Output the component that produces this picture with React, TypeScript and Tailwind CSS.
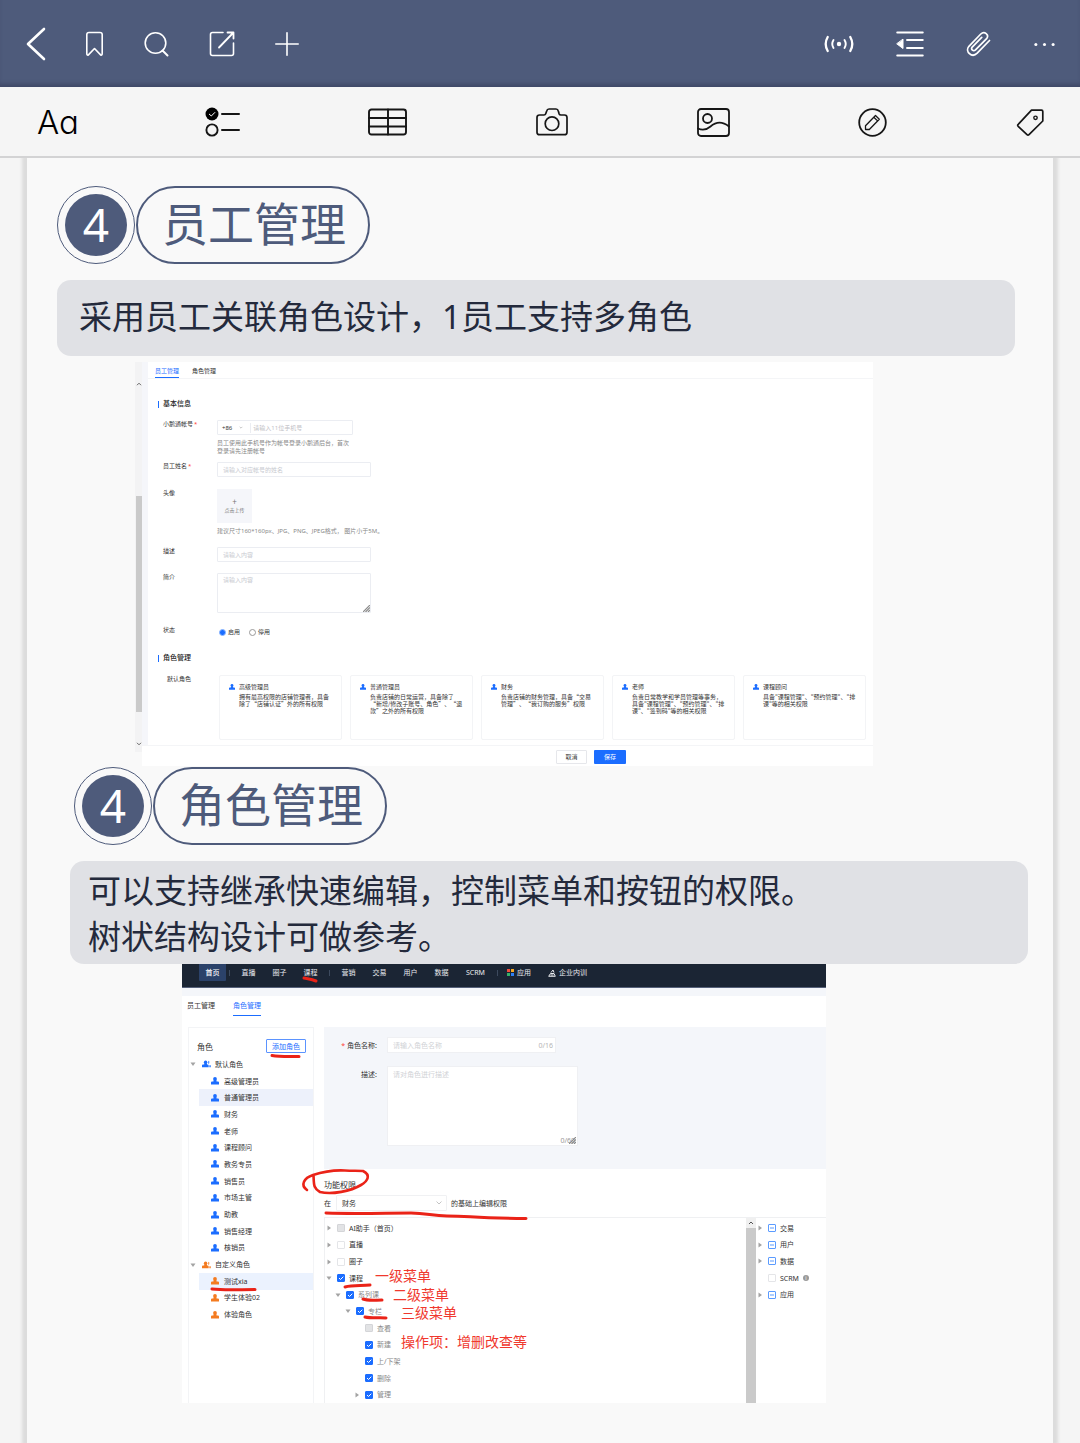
import type { ReactNode } from "react";

const cjk = "font-['Noto_Sans','Noto_Sans_CJK_SC',sans-serif]";

type IconProps = { box: string; className: string; children: ReactNode };

function Glyph({ box, className, children }: IconProps) {
  return (
    <svg
      viewBox={box}
      className={className}
      fill="none"
      stroke="currentColor"
      strokeLinecap="round"
      strokeLinejoin="round"
      aria-hidden="true"
    >
      {children}
    </svg>
  );
}

function IconButton({ label, children }: { label: string; children: ReactNode }) {
  return (
    <button type="button" aria-label={label} className="block shrink-0">
      {children}
    </button>
  );
}

function TopBar() {
  return (
    <header className="flex h-[87px] items-center justify-between bg-[#4e5b7b] pr-6 pl-[26px] text-white shadow-[inset_0_-5px_4px_-2px_rgba(50,54,84,0.5)]">
      <div className="flex items-center">
        <IconButton label="返回">
          <Glyph box="0 0 20 34" className="h-[34px] w-5">
            <path d="M18 2 2 17l16 15" strokeWidth="2.6" />
          </Glyph>
        </IconButton>
        <div className="ml-[39px] flex items-center gap-10">
          <IconButton label="书签">
            <Glyph box="0 0 19 26" className="h-[26px] w-[19px]">
              <path d="M1.8 3.6Q1.8 1.5 4 1.5h11q2.2 0 2.2 2.1v19q0 2-1.6 1.3L9.500 17.500 3.400 23.900Q1.800 24.600 1.800 22.600Z" strokeWidth="1.6" />
            </Glyph>
          </IconButton>
          <IconButton label="搜索">
            <Glyph box="0 0 25 26" className="h-[26px] w-[25px]">
              <circle cx="11.500" cy="12" r="10.300" strokeWidth="1.600" />
              <path d="m18.500 19.500 5 5" strokeWidth="2" />
            </Glyph>
          </IconButton>
          <IconButton label="分享">
            <Glyph box="0 0 26 26" className="h-[26px] w-[26px]">
              <path d="M14 1.500H3.500q-2 0-2 2v19q0 2 2 2h19q2 0 2-2V12" strokeWidth="1.600" />
              <path d="M10 16.500 24 2M18.500 1.500h6v6" strokeWidth="1.800" />
            </Glyph>
          </IconButton>
          <IconButton label="新增">
            <Glyph box="0 0 24 24" className="h-6 w-6">
              <path d="M12 0.800v22.400M0.800 12h22.400" strokeWidth="1.600" />
            </Glyph>
          </IconButton>
        </div>
      </div>
      <div className="flex items-center gap-[42px]">
        <IconButton label="广播">
          <Glyph box="0 0 30 18" className="h-[18px] w-[30px]">
            <circle cx="15" cy="9" r="2.200" fill="currentColor" stroke="none" />
            <path d="M9.500 5Q7 9 9.500 13M20.500 5q2.500 4 0 8" strokeWidth="1.900" />
            <path d="M3.700 2q-4 7 0 14M26.300 2q4 7 0 14" strokeWidth="2.300" />
          </Glyph>
        </IconButton>
        <IconButton label="目录">
          <Glyph box="0 0 28 26" className="h-[26px] w-7">
            <path d="M1.200 1.500h25.600M11 9h15.800M11 17h15.800M1.200 24.500h25.600" strokeWidth="1.900" />
            <path d="M7 8.500v9L1 13Z" fill="currentColor" strokeWidth="1" />
          </Glyph>
        </IconButton>
        <IconButton label="附件">
          <Glyph box="0 0 25 26" className="h-[26px] w-[25px]">
            <path
              d="M23.500 9.500 11.200 22.200c-5.300 5.200-12.600-1.700-8.300-6.900L14.800 3c3.600-3.500 8.800.7 5.800 4.700L9.500 18.900c-2.200 2-5-.5-3.300-2.800L15.700 6.400"
              strokeWidth="1.700"
            />
          </Glyph>
        </IconButton>
        <IconButton label="更多">
          <Glyph box="0 0 24 6" className="h-1.5 w-[23px]">
            <g fill="currentColor" stroke="none">
              <circle cx="3" cy="3.500" r="1.600" />
              <circle cx="12" cy="3.500" r="1.600" />
              <circle cx="21" cy="3.500" r="1.600" />
            </g>
          </Glyph>
        </IconButton>
      </div>
    </header>
  );
}

function ToolBar() {
  return (
    <nav
      aria-label="编辑工具"
      className="flex h-[71px] items-center justify-between border-b-2 border-[#d3d3d4] bg-[#f5f5f5] pt-px pr-9 pl-[37px] text-[#161616]"
    >
      <button type="button" className="w-[39px] text-center font-[Inter,sans-serif] text-[33px] leading-[40px] font-light text-black [font-feature-settings:'cv11']">
        Aa
      </button>
      <IconButton label="清单">
        <Glyph box="0 0 35 30" className="h-[30px] w-[35px]">
          <circle cx="7" cy="7" r="6.500" fill="black" stroke="none" />
          <path d="m4.300 7.200 2 1.800 3.500-3.500" stroke="white" strokeWidth="1" />
          <circle cx="7" cy="23" r="5.600" strokeWidth="1.900" />
          <path d="M17 7h17M17 23h17" strokeWidth="2" />
        </Glyph>
      </IconButton>
      <IconButton label="表格">
        <Glyph box="0 0 39 28" className="h-7 w-[39px]">
          <rect x="1" y="1.500" width="37" height="25" rx="2.500" strokeWidth="1.900" />
          <path d="M1 10h37M1 18.500h37M20 1.500v25" strokeWidth="1.900" />
        </Glyph>
      </IconButton>
      <IconButton label="拍照">
        <Glyph box="0 0 32 28" className="h-7 w-8">
          <path
            d="M3.500 7H8q1.300 0 1.700-1.200l1-2.800Q11.200 1 13 1h7q1.800 0 2.300 2l.8 2.800Q23.600 7 25 7h3.500Q31 7 31 9.500v14.700q0 2.500-2.500 2.500h-25Q1 26.700 1 24.200V9.500Q1 7 3.500 7Z"
            strokeWidth="1.700"
          />
          <circle cx="16" cy="15.700" r="6.800" strokeWidth="1.700" />
        </Glyph>
      </IconButton>
      <IconButton label="图片">
        <Glyph box="0 0 33 29" className="h-[29px] w-[33px]">
          <rect x="1" y="1" width="31" height="27" rx="3" strokeWidth="1.800" />
          <circle cx="10.500" cy="10.500" r="4.500" strokeWidth="1.800" />
          <path d="M1 20.500c5 2.500 9 1 12.500-2C18 14.500 24 12 32 18.500" strokeWidth="1.700" />
        </Glyph>
      </IconButton>
      <IconButton label="手写">
        <Glyph box="0 0 29 29" className="h-[29px] w-[29px]">
          <circle cx="14.500" cy="14.500" r="13.300" strokeWidth="1.800" />
          <path d="M7.500 21.500V17.800L17.500 7.500l3.800 3.700L11.300 21.500ZM15.800 9.200l3.800 3.700" strokeWidth="1.300" />
        </Glyph>
      </IconButton>
      <IconButton label="标签">
        <Glyph box="0 0 28 29" className="h-[29px] w-7">
          <path d="M15.500 2.200h10q1.300 0 1.300 1.300V13L13 26.700q-1 1-2 0L2.200 18.300q-1-1 0-2Z" strokeWidth="1.700" />
          <circle cx="19.500" cy="9.800" r="1.700" strokeWidth="1.400" />
        </Glyph>
      </IconButton>
    </nav>
  );
}

function Heading({ num, title }: { num: string; title: string }) {
  return (
    <h2 className="flex items-center gap-px text-[46px] leading-[62px] text-[#4e5b7b]">
      <span className="flex h-[78px] w-[78px] items-center justify-center rounded-full border border-[#4e5b7b]">
        <span className="flex h-[62px] w-[62px] items-center justify-center rounded-full bg-[#4e5b7b] pb-0.5 text-white">{num}</span>
      </span>
      <span className="flex h-[78px] items-center rounded-full border-2 border-[#4e5b7b] pr-[22px] pb-1 pl-6">{title}</span>
    </h2>
  );
}

function Person({ className }: { className: string }) {
  return (
    <svg viewBox="0 0 8 8" className={className} fill="currentColor" aria-hidden="true">
      <circle cx="4" cy="2" r="1.900" />
      <path d="M2.800 3h2.400l.4 1.600H7q1 0 1 1v1.900H0V5.600q0-1 1-1h1.400Z" />
    </svg>
  );
}

function Caret({ open }: { open: boolean }) {
  return (
    <svg viewBox="0 0 6 6" className="h-1.5 w-1.5 shrink-0 text-[#a3a3a3]" fill="currentColor" aria-hidden="true">
      {open ? <path d="M.5 1.500h5L3 5Z" /> : <path d="M1.500.5v5L5 3Z" />}
    </svg>
  );
}

function Grip() {
  return (
    <svg viewBox="0 0 7 7" className="absolute right-px bottom-px h-[7px] w-[7px] text-[#8a8a8a]" stroke="currentColor" aria-hidden="true">
      <path d="M0 7 7 0M2.500 7 7 2.500M5 7l2-2" strokeWidth="1.200" />
    </svg>
  );
}

const roleCards = [
  { name: "高级管理员", lines: ["拥有最高权限的店铺管理者，具备", "除了“店铺认证”外的所有权限"] },
  { name: "普通管理员", lines: ["负责店铺的日常运营，具备除了", "“新增/修改子账号、角色”、“退", "款”之外的所有权限"] },
  { name: "财务", lines: ["负责店铺的财务管理，具备“交易", "管理”、“我订购的服务”权限"] },
  { name: "老师", lines: ["负责日常教学和学员管理等事务，", "具备\"课程管理\"、\"预约管理\"、\"排", "课\"、\"签到码\"等的相关权限"] },
  { name: "课程顾问", lines: ["具备\"课程管理\"、\"预约管理\"、\"排", "课\"等的相关权限"] },
];

function GroupTitle({ children }: { children: ReactNode }) {
  return (
    <h3 className="ml-[10px] flex h-2 items-center gap-1 text-[7px] font-medium text-[#222]">
      <span className="h-[7px] w-px bg-[#1b6dff]" />
      {children}
    </h3>
  );
}

function Row({ label, id, required, height, children }: { label: string; id?: string; required?: boolean; height: string; children: ReactNode }) {
  return (
    <div className={`ml-[15px] flex items-start ${height}`}>
      <label htmlFor={id} className="h-2 w-[54px] shrink-0 whitespace-nowrap">
        {label}
        {required && <span className="ml-px text-[#ff3b30]">*</span>}
      </label>
      {children}
    </div>
  );
}

const field = "rounded-[1px] border border-[#ebedf2] bg-white px-[5px] text-[6px] leading-[8px] outline-none placeholder:text-[#c8cad0]";

function EmployeeScreen() {
  return (
    <div className="ml-[78px] flex h-[404px] max-w-[738px] text-[6px] leading-[8px] text-[#333]">
      <div className="flex h-[390px] w-[7px] shrink-0 flex-col items-center bg-[#f3f3f4] text-[#666]">
        <svg viewBox="0 0 6 4" className="mt-5 h-1 w-1.5" fill="none" stroke="currentColor" aria-hidden="true">
          <path d="M1 3.200 3 1.200l2 2" />
        </svg>
        <div className="mt-[110px] h-[216px] w-1.5 bg-[#cacaca]" />
        <svg viewBox="0 0 6 4" className="mt-[30px] h-1 w-1.5" fill="none" stroke="currentColor" aria-hidden="true">
          <path d="M1 .8l2 2 2-2" />
        </svg>
      </div>
      <div className="flex min-w-0 grow flex-col">
        <div className="flex h-[383px] flex-col border-l-[6px] border-[#f5f6fa] bg-white">
          <div role="tablist" className="flex h-[17px] items-end gap-[13px] border-b border-b-[#f4f5f7] pl-[7px]">
            <button type="button" role="tab" aria-selected="true" className="h-[13px] border-b border-[#1b6dff] text-[#1b6dff]">
              员工管理
            </button>
            <button type="button" role="tab" aria-selected="false" className="h-[13px] border-b border-transparent">
              角色管理
            </button>
          </div>
          <div className="mt-[21px] mb-3">
            <GroupTitle>基本信息</GroupTitle>
          </div>
          <Row label="小鹅通帐号" id="phone" required height="h-[42px]">
            <div>
              <div className="flex h-[15px] w-[136px] items-center rounded-[1px] border border-[#ebedf2]">
                <span className="pl-1">+86</span>
                <svg viewBox="0 0 6 4" className="mx-[7px] h-[3px] w-1" fill="none" stroke="#aaa" aria-hidden="true">
                  <path d="m1 1 2 2 2-2" />
                </svg>
                <input id="phone" placeholder="请输入11位手机号" className="h-2.5 w-[90px] border-l border-[#ebedf2] pl-[2px] text-[6px] outline-none placeholder:text-[#bfc1c6]" />
              </div>
              <p className="mt-1 text-[#888]">
                员工使用此手机号作为帐号登录小鹅通后台，首次
                <br />
                登录请先注册帐号
              </p>
            </div>
          </Row>
          <Row label="员工姓名" id="staff-name" required height="h-[27px]">
            <input id="staff-name" placeholder="请输入对应帐号的姓名" className={`h-[15px] w-[154px] ${field}`} />
          </Row>
          <Row label="头像" height="h-[58px]">
            <div>
              <button type="button" className="flex h-[34px] w-[35px] flex-col items-center justify-center bg-[#f5f6fa] text-[5px] text-[#777]">
                <span className="text-[8px]">+</span>
                点击上传
              </button>
              <p className="mt-1 text-[#888]">建议尺寸160*160px、JPG、PNG、JPEG格式， 图片小于5M。</p>
            </div>
          </Row>
          <Row label="描述" id="staff-desc" height="h-[26px]">
            <input id="staff-desc" placeholder="请输入内容" className={`h-[15px] w-[154px] ${field}`} />
          </Row>
          <Row label="简介" id="staff-intro" height="h-[53px]">
            <div className="relative">
              <textarea id="staff-intro" placeholder="请输入内容" className={`block h-10 w-[154px] resize-none pt-[2px] ${field}`} />
              <Grip />
            </div>
          </Row>
          <Row label="状态" height="h-[28px]">
            <div className="mt-[2px] flex gap-[9px] pl-[2px]">
              <label className="flex items-center gap-[2px]">
                <input
                  type="radio"
                  name="status"
                  defaultChecked
                  className="h-[7px] w-[7px] appearance-none rounded-full border border-[#8db8ff] bg-[#1b6dff]"
                />
                启用
              </label>
              <label className="flex items-center gap-[2px]">
                <input type="radio" name="status" className="h-[7px] w-[7px] appearance-none rounded-full border border-[#999] bg-white" />
                停用
              </label>
            </div>
          </Row>
          <GroupTitle>角色管理</GroupTitle>
          <div className="mt-[13px] flex pr-[7px]">
            <span className="w-[71px] shrink-0 pl-[19px]">默认角色</span>
            <ul className="grid h-[65px] grow grid-cols-5 gap-2 font-['Noto_Sans_CJK_SC',sans-serif]">
              {roleCards.map((card) => (
                <li key={card.name} className="flex gap-1 rounded-[2px] border border-[#f3f4f6] pt-[7px] pl-[9px] leading-[7px]">
                  <Person className="mt-px h-1.5 w-1.5 shrink-0 text-[#1b6dff]" />
                  <div className="whitespace-nowrap">
                    <h4 className="mb-[2px] h-2 leading-[8px]">{card.name}</h4>
                    {card.lines.map((line) => (
                      <p key={line}>{line}</p>
                    ))}
                  </div>
                </li>
              ))}
            </ul>
          </div>
        </div>
        <div className="flex h-[21px] items-center gap-[7px] border-t border-[#f4f5f7] bg-white pt-px pl-[414px]">
          <button type="button" className="h-[14px] w-[31px] rounded-[1px] border border-[#e6e7eb] bg-white">
            取消
          </button>
          <button type="button" className="h-[14px] w-8 rounded-[1px] bg-[#1b6dff] text-white">
            保存
          </button>
        </div>
      </div>
    </div>
  );
}

type Role = { name: string; group?: boolean; custom?: boolean; active?: "blue" | "sky" };

const roles: Role[] = [
  { name: "默认角色", group: true },
  { name: "高级管理员" },
  { name: "普通管理员", active: "blue" },
  { name: "财务" },
  { name: "老师" },
  { name: "课程顾问" },
  { name: "教务专员" },
  { name: "销售员" },
  { name: "市场主管" },
  { name: "助教" },
  { name: "销售经理" },
  { name: "核销员" },
  { name: "自定义角色", group: true, custom: true },
  { name: "测试xia", custom: true, active: "sky" },
  { name: "学生体验02", custom: true },
  { name: "体验角色", custom: true },
];

function RoleRow({ role }: { role: Role }) {
  const tint = role.custom ? "text-[#f47b20]" : "text-[#1b6dff]";
  if (role.group) {
    return (
      <li className="flex items-center pl-px">
        <Caret open />
        <svg viewBox="0 0 10 8" className={`mr-1 ml-[6px] h-2 w-[9px] ${tint}`} fill="currentColor" aria-hidden="true">
          <circle cx="4" cy="2" r="1.900" />
          <path d="M2.800 3h2.400l.4 1.600h.8q1 0 1 1v1.900H0V5.600q0-1 1-1h1.400Z" />
          <path d="M7 .5q1.800.5 1 2.800L7 4ZM8.200 5.500h1.500v2H8.200Z" />
        </svg>
        {role.name}
      </li>
    );
  }
  const bg = role.active === "blue" ? "bg-[#edf1fb]" : role.active === "sky" ? "bg-[#ebf2fe]" : "";
  return (
    <li className={`ml-[10px] flex items-center gap-[5px] pl-3 ${bg}`}>
      <Person className={`h-2 w-2 ${tint}`} />
      {role.name}
    </li>
  );
}

type Perm = { name: string; level: string; caret?: "open" | "closed"; state: "on" | "off" | "disabled" | "partial"; muted?: boolean; info?: boolean };

const perms: Perm[] = [
  { name: "AI助手（首页）", level: "pl-0", caret: "closed", state: "disabled" },
  { name: "直播", level: "pl-0", caret: "closed", state: "off" },
  { name: "圈子", level: "pl-0", caret: "closed", state: "off" },
  { name: "课程", level: "pl-0", caret: "open", state: "on" },
  { name: "系列课", level: "pl-[9px]", caret: "open", state: "on", muted: true },
  { name: "专栏", level: "pl-[19px]", caret: "open", state: "on", muted: true },
  { name: "查看", level: "pl-[28px]", state: "disabled", muted: true },
  { name: "新建", level: "pl-[28px]", state: "on", muted: true },
  { name: "上/下架", level: "pl-[28px]", state: "on", muted: true },
  { name: "删除", level: "pl-[28px]", state: "on", muted: true },
  { name: "管理", level: "pl-[28px]", caret: "closed", state: "on", muted: true },
];

const morePerms: Perm[] = [
  { name: "交易", level: "pl-0", caret: "closed", state: "partial" },
  { name: "用户", level: "pl-0", caret: "closed", state: "partial" },
  { name: "数据", level: "pl-0", caret: "closed", state: "partial" },
  { name: "SCRM", level: "pl-0", state: "off", info: true },
  { name: "应用", level: "pl-0", caret: "closed", state: "partial" },
];

const boxStyle = {
  on: "border-[#1b6dff] bg-[#1b6dff]",
  off: "border-[#e4e5e8] bg-white",
  disabled: "border-[#d4d5d8] bg-[#e2e3e5]",
  partial: "border-[#5b9bff] bg-white",
};

function PermRow({ perm }: { perm: Perm }) {
  return (
    <li className={`flex items-center ${perm.level}`}>
      <span className="w-[11px]">{perm.caret && <Caret open={perm.caret === "open"} />}</span>
      <label className={`flex items-center gap-1 whitespace-nowrap ${perm.muted ? "text-[#888]" : ""}`}>
        <span className="relative flex h-2 w-2">
          <input
            type="checkbox"
            defaultChecked={perm.state === "on"}
            disabled={perm.state === "disabled"}
            className={`h-2 w-2 appearance-none rounded-[1px] border ${boxStyle[perm.state]}`}
          />
          {(perm.state === "on" || perm.state === "partial") && (
            <svg viewBox="0 0 8 8" className="pointer-events-none absolute inset-0" fill="none" stroke={perm.state === "on" ? "#fff" : "#5b9bff"} aria-hidden="true">
              <path d={perm.state === "on" ? "m2 4 1.500 1.500L6.300 2.700" : "M2 4h4"} />
            </svg>
          )}
        </span>
        {perm.name}
        {perm.info && <span className="flex h-1.5 w-1.5 items-center justify-center rounded-full bg-[#999] text-[5px] leading-none text-white">i</span>}
      </label>
    </li>
  );
}

function NavItem({ children }: { children: ReactNode }) {
  return (
    <a href="#" className="w-[31px] text-center">
      {children}
    </a>
  );
}

function NavRule() {
  return <span className="mx-[3px] h-1.5 w-px bg-[#3d4a5e]" />;
}

function Notes() {
  return (
    <div className="pointer-events-none absolute inset-0 text-[14px] leading-[18px] whitespace-nowrap text-[#f0382e]">
      <svg viewBox="0 0 644 439" className="absolute top-0 left-0 h-[439px] w-[644px]" fill="none" stroke="#ea2318" strokeWidth="3" strokeLinecap="round" strokeLinejoin="round" aria-hidden="true">
        <path d="M122 14c4 1 7 1 12 3" />
        <path d="M90 91.500c8 1.500 18 1 27 1" />
        <path d="M125 226c-7-5-3-12 6-15 12-4 22-5 32-4.500 8 .5 13 0 18 .5 8 4 5 10-2 14-10 6-29 10-41 7-7-4-6-8-6.500-17" strokeWidth="2.600" />
        <path d="M144 249c30 1 60 0 85 0 16 0 21 3 36 3 24 0 24 2 79 2.500" />
        <path d="M30 325c13 1.500 28 .5 43 .5" />
        <path d="M163 323c8-2 17-1 25-2" />
        <path d="M181 335c5 2 12 1 19 1" />
        <path d="M183 353c6 1.500 14 .5 21 1" />
      </svg>
      <span className="absolute top-[303px] left-[193px]">一级菜单</span>
      <span className="absolute top-[322px] left-[211px]">二级菜单</span>
      <span className="absolute top-[340px] left-[219px]">三级菜单</span>
      <span className="absolute top-[369px] left-[219px]">操作项：增删改查等</span>
    </div>
  );
}

function RoleScreen() {
  return (
    <div className="relative ml-[112px] flex h-[439px] max-w-[644px] flex-col bg-white text-[7px] leading-[9px] text-[#333]">
      <nav aria-label="店铺导航" className="flex h-6 shrink-0 items-start border-b border-[#56617a] bg-[#1b2534] pl-[17px] text-[#e8eaee]">
        <div className="flex h-[17px] items-center">
          <a href="#" className="flex h-[17px] w-[27px] items-center justify-center rounded-b-[1px] bg-[#2b426a] font-medium text-white">
            首页
          </a>
          <NavRule />
          <NavItem>直播</NavItem>
          <NavItem>圈子</NavItem>
          <NavItem>课程</NavItem>
          <NavRule />
          <NavItem>营销</NavItem>
          <NavItem>交易</NavItem>
          <NavItem>用户</NavItem>
          <NavItem>数据</NavItem>
          <a href="#" className="w-[37px] text-center">
            SCRM
          </a>
          <NavRule />
          <a href="#" className="ml-1.5 flex items-center gap-[3px]">
            <svg viewBox="0 0 7 7" className="h-[7px] w-[7px]" aria-hidden="true">
              <path d="M0 0h3v3H0z" fill="#f04b3c" />
              <path d="M4 0h3v3H4z" fill="#f5a623" />
              <path d="M0 4h3v3H0z" fill="#34b26a" />
              <path d="M4 4h3v3H4z" fill="#2f80f5" />
            </svg>
            应用
          </a>
          <a href="#" className="ml-[17px] flex items-center gap-[3px]">
            <svg viewBox="0 0 8 8" className="h-2 w-2" fill="none" stroke="currentColor" aria-hidden="true">
              <path d="M3 3.500 5 1l1 2.500M.7 7.300 2.500 4.500H6l1.300 2.800ZM2.500 6h3" />
            </svg>
            企业内训
          </a>
        </div>
      </nav>
      <div role="tablist" className="flex h-[39px] shrink-0 items-start gap-[18px] border-t-8 border-[#f4f6fa] pt-[5px] pl-[5px]">
        <button type="button" role="tab" aria-selected="false" className="h-[15px] border-b border-transparent pb-[5px]">
          员工管理
        </button>
        <button type="button" role="tab" aria-selected="true" className="h-[15px] border-b border-[#1b6dff] pb-[5px] text-[#1b6dff]">
          角色管理
        </button>
      </div>
      <div className="flex min-h-0 grow">
        <aside className="ml-1.5 w-[126px] shrink-0 border border-b-0 border-[#f3f4f6]">
          <div className="mt-[11px] flex h-[14px] items-center justify-between pr-[7px] pl-2">
            <h3 className="text-[8px]">角色</h3>
            <button type="button" className="h-[14px] w-10 rounded-[1px] border border-[#5b93ff] text-[#1b6dff]">
              添加角色
            </button>
          </div>
          <ul className="mt-[3px] grid h-[267px] auto-rows-fr">
            {roles.map((role) => (
              <RoleRow key={role.name} role={role} />
            ))}
          </ul>
        </aside>
        <section className="ml-[10px] flex min-w-0 grow flex-col">
          <form className="flex h-[142px] shrink-0 flex-col gap-[13px] bg-[#f4f6fa] pt-[10px]">
            <div className="flex items-start">
              <label htmlFor="role-name" className="w-[53px] pt-1 text-right">
                <span className="mr-[2px] text-[#ff3b30]">*</span>角色名称:
              </label>
              <div className="ml-[10px] flex h-4 w-[169px] items-center border border-[#eff0f3] bg-white pr-[2px] pl-[5px]">
                <input id="role-name" placeholder="请输入角色名称" className="min-w-0 grow text-[7px] outline-none placeholder:text-[#d0d2d6]" />
                <span className="text-[#b5b5b5]">0/16</span>
              </div>
            </div>
            <div className="flex items-start">
              <label htmlFor="role-desc" className="w-[53px] pt-1 text-right">
                描述:
              </label>
              <div className="relative ml-[10px] h-20 w-[191px] border border-[#eff0f3] bg-white">
                <textarea id="role-desc" placeholder="请对角色进行描述" className="block h-full w-full resize-none px-[5px] py-[3px] text-[7px] outline-none placeholder:text-[#d0d2d6]" />
                <span className="absolute right-[2px] bottom-0 text-[#999]">0/60</span>
                <Grip />
              </div>
            </div>
          </form>
          <h3 className="mt-[11px] text-[8px] leading-[10px]">功能权限</h3>
          <div className="mt-[5px] flex h-4 items-center gap-1">
            <label htmlFor="base-role" className="w-2">
              在
            </label>
            <div className="relative">
              <select id="base-role" className="block h-4 w-[111px] appearance-none rounded-[1px] border border-[#f0f1f3] bg-white pl-[5px] text-[7px] leading-[9px] outline-none">
                <option>财务</option>
              </select>
              <svg viewBox="0 0 6 4" className="pointer-events-none absolute top-1.5 right-[5px] h-1 w-1.5" fill="none" stroke="#b5b5b5" aria-hidden="true">
                <path d="m.5.500 2.500 2.500L5.500.500" strokeWidth=".8" />
              </svg>
            </div>
            <span>的基础上编辑权限</span>
          </div>
          <div className="mt-[6px] flex min-h-0 grow border-t border-l border-[#eff0f2]">
            <ul className="mt-[2px] ml-px grid h-[183px] grow auto-rows-fr">
              {perms.map((perm) => (
                <PermRow key={perm.name} perm={perm} />
              ))}
            </ul>
            <div className="flex w-[10px] shrink-0 flex-col bg-[#cacaca]">
              <svg viewBox="0 0 10 10" className="h-[10px] w-[10px] bg-[#f0f0f0]" fill="none" stroke="#555" aria-hidden="true">
                <path d="m3 6 2-2 2 2" />
              </svg>
            </div>
            <ul className="mt-[2px] ml-px grid h-[83px] w-[69px] shrink-0 auto-rows-fr">
              {morePerms.map((perm) => (
                <PermRow key={perm.name} perm={perm} />
              ))}
            </ul>
          </div>
        </section>
      </div>
      <Notes />
    </div>
  );
}

export default function App() {
  return (
    <div className={`flex min-h-screen flex-col bg-[#f5f5f5] ${cjk}`}>
      <TopBar />
      <ToolBar />
      <main className="mx-[27px] grow bg-[#f9f9f9] pt-7 pb-10 shadow-[-3px_0_3px_2px_#dcdcdc,3px_0_3px_2px_#dcdcdc] [clip-path:inset(0_-8px)]">
        <section className="pr-[38px] pl-[30px]">
          <Heading num="4" title="员工管理" />
          <p className="mt-4 mb-1.5 rounded-[14px] bg-[#e0e1e5] pt-[14px] pb-4 pl-[22px] text-[33px] leading-[46px] text-[#242a3c]">
            采用员工关联角色设计，1员工支持多角色
          </p>
          <EmployeeScreen />
        </section>
        <section className="mt-px pr-[25px] pl-[43px]">
          <div className="ml-1">
            <Heading num="4" title="角色管理" />
          </div>
          <p className="mt-4 rounded-[14px] bg-[#e0e1e5] pt-[7px] pb-1 pl-[18px] text-[33px] leading-[46px] text-[#242a3c]">
            可以支持继承快速编辑，控制菜单和按钮的权限。
            <br />
            树状结构设计可做参考。
          </p>
          <RoleScreen />
        </section>
      </main>
    </div>
  );
}
